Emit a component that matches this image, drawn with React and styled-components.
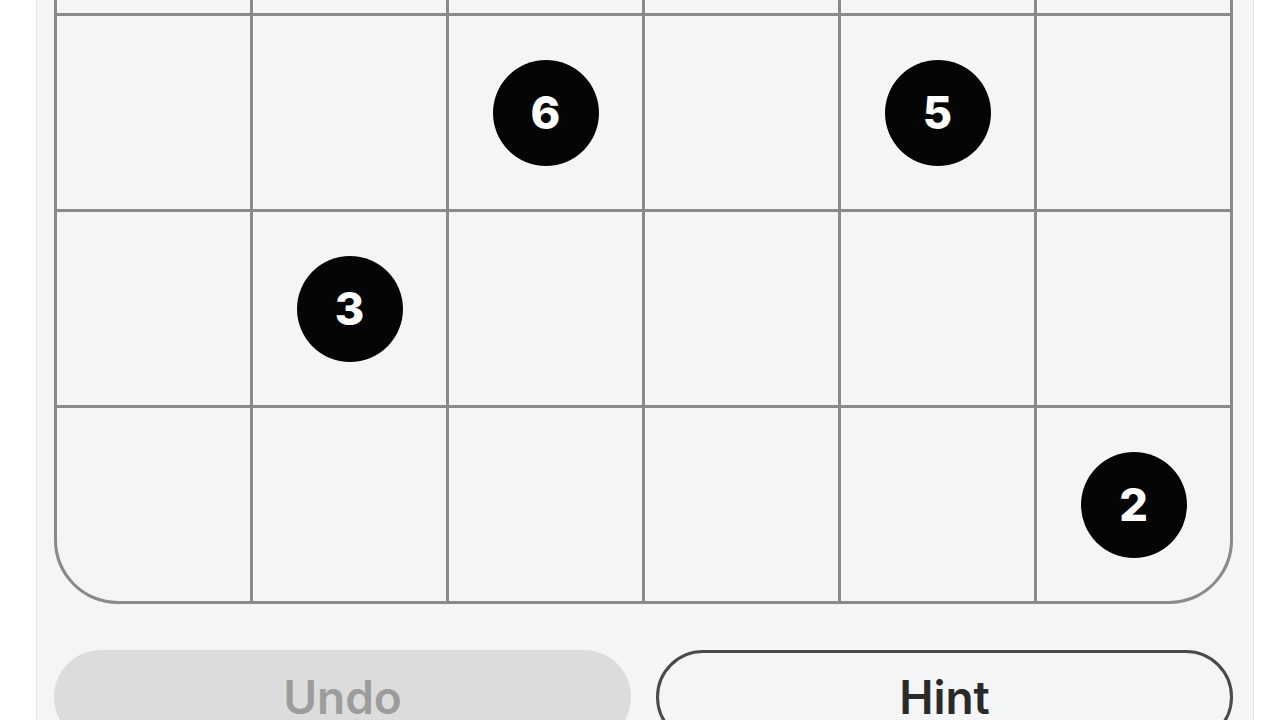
import styled, { createGlobalStyle } from "styled-components";

const GlobalStyle = createGlobalStyle`
  html, body {
    margin: 0;
    padding: 0;
    background: #ffffff;
    overflow: hidden;
  }
  body {
    font-family: Inter, "Noto Sans", "Liberation Sans", sans-serif;
  }
`;

const Panel = styled.div`
  margin-top: -595px;
  margin-left: 36px;
  width: 1218px;
  box-sizing: border-box;
  padding: 20px 20px 40px 17px;
  background-color: #f4f5f7;
  border-left: 1px solid #e4e6e9;
  border-right: 1px solid #e4e6e9;
  display: flex;
  flex-direction: column;
  gap: 46px;
`;

const Board = styled.div`
  display: grid;
  grid-template-columns: repeat(6, 193px);
  grid-template-rows: repeat(6, 193px);
  gap: 3px;
  width: 1179px;
  box-sizing: border-box;
  border: 3px solid #8a8a8a;
  border-radius: 64px;
  background-color: #8a8a8a;
  overflow: hidden;
`;

const Cell = styled.div`
  background-color: #f4f5f7;
  display: flex;
  align-items: center;
  justify-content: center;
`;

const Dot = styled.div`
  width: 106px;
  height: 106px;
  border-radius: 50%;
  background-color: #050505;
  color: #ffffff;
  display: flex;
  align-items: center;
  justify-content: center;
  font-size: 45px;
  font-weight: 800;
  line-height: 1;
`;

const Actions = styled.div`
  display: grid;
  grid-template-columns: 1fr 1fr;
  gap: 25px;
  width: 1179px;
`;

const Button = styled.button`
  height: 94px;
  border-radius: 47px;
  font-family: Inter, "Noto Sans", "Liberation Sans", sans-serif;
  font-size: 46px;
  font-weight: 600;
  box-sizing: border-box;
  background-color: ${(props) => (props.disabled ? "#dcdcdc" : "transparent")};
  color: ${(props) => (props.disabled ? "#9c9c9c" : "#2a2a2a")};
  border: ${(props) => (props.disabled ? "none" : "3px solid #4a4a4a")};
  padding: 0;
`;

const dots = {
  "3-2": 6,
  "3-4": 5,
  "4-1": 3,
  "5-5": 2,
};

const App = () => {
  const cells = [];
  for (let r = 0; r < 6; r++) {
    for (let c = 0; c < 6; c++) {
      const n = dots[r + "-" + c];
      cells.push(<Cell key={r + "-" + c}>{n && <Dot>{n}</Dot>}</Cell>);
    }
  }
  return (
    <>
      <GlobalStyle />
      <Panel>
        <Board>{cells}</Board>
        <Actions>
          <Button disabled>Undo</Button>
          <Button>Hint</Button>
        </Actions>
      </Panel>
    </>
  );
};

export default App;
